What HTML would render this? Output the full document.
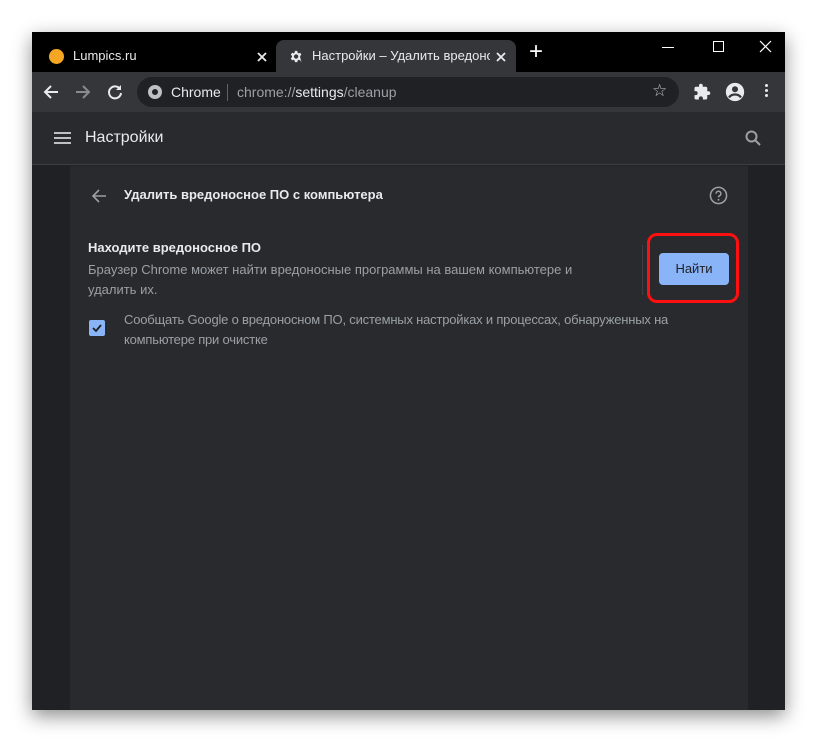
<!DOCTYPE html>
<html><head><meta charset="utf-8">
<style>
*{margin:0;padding:0;box-sizing:border-box}
body{width:817px;height:742px;background:#fff;position:relative;overflow:hidden;font-family:"Liberation Sans",Arial,sans-serif}
.win{position:absolute;left:32px;top:32px;width:753px;height:678px;background:#202124;box-shadow:0 6px 18px rgba(0,0,0,.45);overflow:hidden}
.tabs{position:absolute;left:0;top:0;width:753px;height:40px;background:#000}
.tab1{position:absolute;left:0;top:8px;width:240px;height:32px;color:#e8eaed;font-size:13px}
.tab2{position:absolute;left:244px;top:8px;width:240px;height:32px;background:#35363a;border-radius:8px 8px 0 0;color:#e8eaed;font-size:13px}
.a{position:absolute}
.toolbar{position:absolute;left:0;top:40px;width:753px;height:40px;background:#35363a}
.omni{position:absolute;left:105px;top:5px;width:542px;height:30px;background:#202124;border-radius:15px}
.hdr{position:absolute;left:0;top:80px;width:753px;height:53px;background:#292a2d;border-bottom:1px solid #3c4043}
.card{position:absolute;left:38px;top:134px;width:678px;height:544px;background:#292a2d}
</style></head><body>
<div class="win">
 <div class="tabs">
  <div class="tab1">
   <div class="a" style="left:17px;top:9px;width:15px;height:15px;border-radius:50%;background:#f5a623"></div>
   <div class="a" style="left:41px;top:8px">Lumpics.ru</div>
   <svg class="a" style="left:225px;top:12px" width="10" height="10"><path d="M1 1L9 9M9 1L1 9" stroke="#e8eaed" stroke-width="1.8"/></svg>
  </div>
  <div class="tab2">
   <svg class="a" style="left:12px;top:9px" width="15" height="15" viewBox="0 0 24 24"><path fill="#e8eaed" d="M19.4 13a7.5 7.5 0 0 0 0-2l2.1-1.6-2-3.5-2.5 1a7 7 0 0 0-1.7-1L15 3h-4l-.4 2.9a7 7 0 0 0-1.7 1l-2.5-1-2 3.5L6.5 11a7.5 7.5 0 0 0 0 2l-2.1 1.6 2 3.5 2.5-1a7 7 0 0 0 1.7 1L11 21h4l.4-2.9a7 7 0 0 0 1.7-1l2.5 1 2 3.5zM13 15.5a3.5 3.5 0 1 1 0-7 3.5 3.5 0 0 1 0 7z"/></svg>
   <div class="a" style="left:36px;top:8px;width:178px;white-space:nowrap;overflow:hidden">Настройки – Удалить вредоносное</div>
   <svg class="a" style="left:220px;top:12px" width="10" height="10"><path d="M1 1L9 9M9 1L1 9" stroke="#e8eaed" stroke-width="1.8"/></svg>
  </div>
  <div class="a" style="left:497px;top:6px;color:#fff;font-size:24px;font-weight:300">+</div>
  <div class="a" style="left:630px;top:15px;width:12px;height:1px;background:#fff"></div>
  <div class="a" style="left:681px;top:9px;width:11px;height:11px;border:1px solid #fff"></div>
  <svg class="a" style="left:727px;top:8px" width="13" height="13"><path d="M1 1L12 12M12 1L1 12" stroke="#fff" stroke-width="1.2"/></svg>
 </div>
 <div class="toolbar">
  <svg class="a" style="left:10px;top:11px" width="18" height="18" viewBox="0 0 18 18"><path d="M16 9H3M9 3L3 9l6 6" stroke="#e8eaed" stroke-width="2" fill="none"/></svg>
  <svg class="a" style="left:42px;top:11px" width="18" height="18" viewBox="0 0 18 18"><path d="M2 9h13M9 3l6 6-6 6" stroke="#8a8b8e" stroke-width="2" fill="none"/></svg>
  <svg class="a" style="left:74px;top:11px" width="18" height="18" viewBox="0 0 18 18"><path d="M14 6a6 6 0 1 0 1 4" stroke="#e8eaed" stroke-width="2" fill="none"/><path d="M15 2v5h-5z" fill="#e8eaed"/></svg>
  <div class="omni">
   <div class="a" style="left:11px;top:8px;width:14px;height:14px;border-radius:50%;background:#bdc1c6"><div class="a" style="left:4px;top:4px;width:6px;height:6px;border-radius:50%;background:#202124"></div></div>
   <div class="a" style="left:34px;top:7px;color:#e8eaed;font-size:14px">Chrome</div>
   <div class="a" style="left:90px;top:7px;width:1px;height:17px;background:#5f6368"></div>
   <div class="a" style="left:100px;top:7px;color:#9aa0a6;font-size:14px">chrome://<span style="color:#e8eaed">settings</span>/cleanup</div>
   <div class="a" style="left:515px;top:4px;color:#c0c0c0;font-size:17px">☆</div>
  </div>
  <svg class="a" style="left:661px;top:11px" width="18" height="18" viewBox="0 0 24 24"><path fill="#e8eaed" d="M20.5 11H19V7a2 2 0 0 0-2-2h-4V3.5a2.5 2.5 0 0 0-5 0V5H4a2 2 0 0 0-2 2v3.8h1.5a2.7 2.7 0 0 1 0 5.4H2V20a2 2 0 0 0 2 2h3.8v-1.5a2.7 2.7 0 0 1 5.4 0V22H17a2 2 0 0 0 2-2v-4h1.5a2.5 2.5 0 0 0 0-5z"/></svg>
  <svg class="a" style="left:692px;top:9px" width="22" height="22" viewBox="0 0 24 24"><circle cx="12" cy="12" r="10" fill="#e8eaed"/><circle cx="12" cy="9" r="3.3" fill="#35363a"/><path d="M5.5 18c1.5-2.5 4-3.3 6.5-3.3s5 .8 6.5 3.3" stroke="#35363a" stroke-width="2.4" fill="none"/></svg>
  <div class="a" style="left:733px;top:12px;width:3px;height:3px;border-radius:50%;background:#e8eaed;box-shadow:0 5px 0 #e8eaed,0 10px 0 #e8eaed"></div>
 </div>
 <div class="hdr">
  <div class="a" style="left:22px;top:20px;width:17px;height:2px;background:#bdc1c6;box-shadow:0 5px 0 #bdc1c6,0 10px 0 #bdc1c6"></div>
  <div class="a" style="left:53px;top:17px;color:#e8eaed;font-size:16px">Настройки</div>
  <svg class="a" style="left:713px;top:18px" width="17" height="17" viewBox="0 0 17 17"><circle cx="6.5" cy="6.5" r="5" stroke="#9aa0a6" stroke-width="2" fill="none"/><path d="M10 10l5 5" stroke="#9aa0a6" stroke-width="2"/></svg>
 </div>
 <div class="card">
  <svg class="a" style="left:21px;top:22px" width="16" height="16" viewBox="0 0 16 16"><path d="M15 8H2M8 2L2 8l6 6" stroke="#9aa0a6" stroke-width="1.6" fill="none"/></svg>
  <div class="a" style="left:54px;top:21px;color:#e8eaed;font-size:13px;font-weight:bold">Удалить вредоносное ПО с компьютера</div>
  <svg class="a" style="left:639px;top:20px" width="19" height="19" viewBox="0 0 20 20"><circle cx="10" cy="10" r="8.5" stroke="#9aa0a6" stroke-width="1.6" fill="none"/><path d="M7.5 8a2.5 2.5 0 1 1 3.5 2.3c-.7.4-1 .9-1 1.7" stroke="#9aa0a6" stroke-width="1.6" fill="none"/><circle cx="10" cy="14.5" r="1" fill="#9aa0a6"/></svg>
  <div class="a" style="left:18px;top:74px;color:#e8eaed;font-size:13px;font-weight:bold">Находите вредоносное ПО</div>
  <div class="a" style="left:18px;top:94px;width:520px;color:#9aa0a6;font-size:13px;line-height:20px">Браузер Chrome может найти вредоносные программы на вашем компьютере и удалить их.</div>
  <div class="a" style="left:572px;top:79px;width:1px;height:50px;background:#3c4043"></div>
  <div class="a" style="left:589px;top:87px;width:70px;height:32px;background:#8ab4f8;border-radius:4px;color:#202124;font-size:13px;text-align:center;line-height:32px">Найти</div>
  <div class="a" style="left:577px;top:67px;width:92px;height:70px;border:3px solid #ff1010;border-radius:10px"></div>
  <div class="a" style="left:19px;top:154px;width:16px;height:16px;background:#8ab4f8;border-radius:2px">
   <svg class="a" style="left:2px;top:2px" width="12" height="12" viewBox="0 0 12 12"><path d="M2 6l3 3 5-6" stroke="#202124" stroke-width="1.8" fill="none"/></svg>
  </div>
  <div class="a" style="left:54px;top:144px;width:560px;color:#9aa0a6;font-size:13px;line-height:20px;letter-spacing:-0.2px">Сообщать Google о вредоносном ПО, системных настройках и процессах, обнаруженных на компьютере при очистке</div>
 </div>
</div>
</body></html>
